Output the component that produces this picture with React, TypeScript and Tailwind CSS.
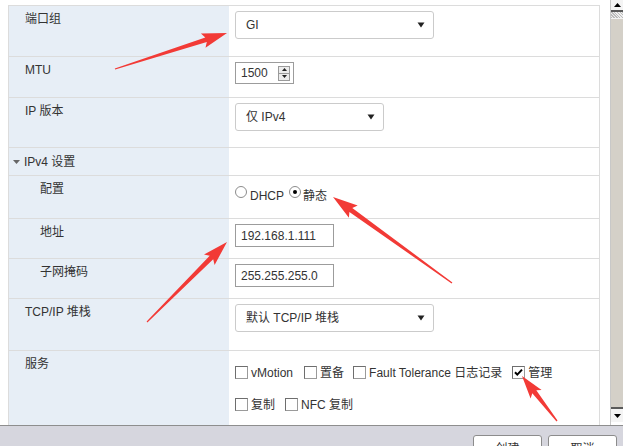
import React from "react";

const FONT = { fontFamily: '"Liberation Sans", "Noto Sans CJK SC", Arial, sans-serif' };

function Tri({ className = "" }: { className?: string }) {
  return (
    <svg width="8" height="6" viewBox="0 0 8 6" className={className}>
      <polygon points="0.5,0.5 7.5,0.5 4,5.5" fill="#222" />
    </svg>
  );
}

function Select({ text, w }: { text: string; w: string }) {
  return (
    <div className={`${w} h-[28px] rounded-[3px] border border-[#cbcbcb] bg-white flex items-center justify-between pl-[10px] pr-[8px]`}>
      <span>{text}</span>
      <Tri />
    </div>
  );
}

function Input({ text }: { text: string }) {
  return (
    <div className="w-[99px] h-[23px] border border-[#9c9c9c] bg-white flex items-center pl-[5px]">
      {text}
    </div>
  );
}

function Checkbox({ checked = false }: { checked?: boolean }) {
  return (
    <div className="w-[13px] h-[13px] border border-[#9a9a9a] border-t-[#6e6e6e] border-l-[#6e6e6e] bg-white shrink-0 relative">
      {checked && (
        <svg width="11" height="11" viewBox="0 0 11 11" className="absolute left-0 top-0">
          <path d="M2 5.2 L4.3 7.6 L9 2.6" stroke="#000" strokeWidth="2" fill="none" />
        </svg>
      )}
    </div>
  );
}

function Radio({ checked = false }: { checked?: boolean }) {
  return (
    <div className="w-[12px] h-[12px] rounded-full border border-[#8c8c8c] bg-white shrink-0 flex items-center justify-center">
      {checked && <div className="w-[4px] h-[4px] rounded-full bg-black" />}
    </div>
  );
}

function Row({
  h,
  label,
  indent = false,
  children,
  valuePad = "pt-[5px]",
}: {
  h: string;
  label: React.ReactNode;
  indent?: boolean;
  children?: React.ReactNode;
  valuePad?: string;
}) {
  return (
    <div className={`flex border-t border-[#dcdcdc] ${h} shrink-0`}>
      <div className={`w-[220px] bg-[#e7eef6] ${indent ? "pl-[31px]" : "pl-[16px]"} pt-[5px] leading-[16px]`}>
        {label}
      </div>
      <div className={`flex-1 pl-[6px] ${valuePad}`}>{children}</div>
    </div>
  );
}

function arrowPoly(x1: number, y1: number, x2: number, y2: number, headLen = 22, headW = 15, shaftW = 5) {
  const dx = x2 - x1;
  const dy = y2 - y1;
  const L = Math.hypot(dx, dy);
  const ux = dx / L;
  const uy = dy / L;
  const nx = -uy;
  const ny = ux;
  const bx = x2 - ux * headLen;
  const by = y2 - uy * headLen;
  const wx = x2 - ux * (headLen + 3);
  const wy = y2 - uy * (headLen + 3);
  const p = (x: number, y: number) => `${x.toFixed(1)},${y.toFixed(1)}`;
  return [
    p(x1 + nx * 0.6, y1 + ny * 0.6),
    p(bx + (nx * shaftW) / 2, by + (ny * shaftW) / 2),
    p(wx + (nx * headW) / 2, wy + (ny * headW) / 2),
    p(x2, y2),
    p(wx - (nx * headW) / 2, wy - (ny * headW) / 2),
    p(bx - (nx * shaftW) / 2, by - (ny * shaftW) / 2),
    p(x1 - nx * 0.6, y1 - ny * 0.6),
  ].join(" ");
}

export default function App() {
  return (
    <div className="w-[623px] h-[446px] relative overflow-hidden bg-white text-[12px] text-[#333] leading-[16px]" style={FONT}>
      <div className="flex flex-col h-full">
        <div className="flex h-[425px] shrink-0">
          <div className="w-[610px] overflow-hidden pt-[5px] pl-[8px]">
            <div className="w-[592px] border-l border-r border-[#dcdcdc] flex flex-col">
              <Row h="h-[51px]" label="端口组">
                <Select text="GI" w="w-[199px]" />
              </Row>
              <Row h="h-[41px]" label="MTU">
                <div className="w-[59px] h-[22px] border border-[#9c9c9c] bg-white flex items-center justify-between pl-[5px] pr-[3px]">
                  <span>1500</span>
                  <div className="flex flex-col w-[12px] h-[15px] border border-[#9a9a9a] bg-[#ececec]">
                    <div className="flex-1 flex items-center justify-center border-b border-[#9a9a9a]">
                      <svg width="5" height="3" viewBox="0 0 5 3"><polygon points="0,3 5,3 2.5,0" fill="#222" /></svg>
                    </div>
                    <div className="flex-1 flex items-center justify-center">
                      <svg width="5" height="3" viewBox="0 0 5 3"><polygon points="0,0 5,0 2.5,3" fill="#222" /></svg>
                    </div>
                  </div>
                </div>
              </Row>
              <Row h="h-[50px]" label="IP 版本">
                <Select text="仅 IPv4" w="w-[149px]" />
              </Row>
              <div className="flex border-t border-[#dcdcdc] h-[28px] shrink-0">
                <div className="w-[220px] bg-[#e7eef6] pl-[4px] flex items-center gap-[4px]">
                  <svg width="7" height="4" viewBox="0 0 7 4"><polygon points="0,0 7,0 3.5,4" fill="#666" /></svg>
                  <span>IPv4 设置</span>
                </div>
                <div className="flex-1" />
              </div>
              <Row h="h-[43px]" label="配置" indent valuePad="pt-[10px]">
                <div className="flex items-start">
                  <Radio />
                  <span className="ml-[3px] mt-[2px]">DHCP</span>
                  <div className="ml-[5px]"><Radio checked /></div>
                  <span className="ml-[2px] mt-[2px]">静态</span>
                </div>
              </Row>
              <Row h="h-[40px]" label="地址" indent>
                <Input text="192.168.1.111" />
              </Row>
              <Row h="h-[40px]" label="子网掩码" indent>
                <Input text="255.255.255.0" />
              </Row>
              <Row h="h-[52px]" label="TCP/IP 堆栈">
                <Select text="默认 TCP/IP 堆栈" w="w-[199px]" />
              </Row>
              <Row h="h-[76px]" label="服务" valuePad="pt-[12px]">
                <div className="flex flex-col gap-[14px]">
                  <div className="flex items-center h-[18px]">
                    <Checkbox />
                    <span className="ml-[3px] mt-[2px]">vMotion</span>
                    <div className="ml-[11px]"><Checkbox /></div>
                    <span className="ml-[3px] mt-[2px]">置备</span>
                    <div className="ml-[9px]"><Checkbox /></div>
                    <span className="ml-[3px] mt-[2px]">Fault Tolerance 日志记录</span>
                    <div className="ml-[10px]"><Checkbox checked /></div>
                    <span className="ml-[3px] mt-[2px]">管理</span>
                  </div>
                  <div className="flex items-center h-[18px]">
                    <Checkbox />
                    <span className="ml-[3px] mt-[2px]">复制</span>
                    <div className="ml-[10px]"><Checkbox /></div>
                    <span className="ml-[3px] mt-[2px]">NFC 复制</span>
                  </div>
                </div>
              </Row>
            </div>
          </div>
          <div className="w-[13px] flex flex-col border-l border-[#c8c8c8] bg-[#d4d0c8]">
            <div className="h-[12px] bg-[#f4f4f4] flex items-center justify-center border-b-2 border-[#5a5a5a]">
              <svg width="7" height="4" viewBox="0 0 7 4"><polygon points="0,4 7,4 3.5,0" fill="#000" /></svg>
            </div>
            <div className="h-[6px] bg-[repeating-linear-gradient(45deg,#bbb_0px,#bbb_1px,#eee_1px,#eee_2px)]" />
            <div className="flex-1 bg-[#d4d0c8] border-t border-[#f2f2f2]" />
            <div className="h-[15px] bg-[#f4f4f4] flex items-center justify-center border-t-2 border-[#5a5a5a]">
              <svg width="7" height="4" viewBox="0 0 7 4"><polygon points="0,0 7,0 3.5,4" fill="#000" /></svg>
            </div>
            <div className="h-[3px] bg-white" />
          </div>
        </div>
        <div className="flex-1 bg-[#d6d6de] border-t border-[#8e8e8e] flex justify-end items-start pt-[9px] pr-[6px] gap-[6px]">
          <div className="w-[69px] h-[22px] rounded-[3px] border border-[#8c8c8c] bg-white flex justify-center pt-[5px]">创建</div>
          <div className="w-[69px] h-[22px] rounded-[3px] border border-[#8c8c8c] bg-white flex justify-center pt-[5px]">取消</div>
        </div>
      </div>
      <svg className="absolute inset-0 pointer-events-none" width="623" height="446" viewBox="0 0 623 446">
        <polygon points={arrowPoly(115, 69, 227, 33)} fill="#f23a36" />
        <polygon points={arrowPoly(452, 283, 333, 197)} fill="#f23a36" />
        <polygon points={arrowPoly(147, 322, 227, 242)} fill="#f23a36" />
        <polygon points={arrowPoly(557, 421, 522, 376, 20, 14, 5)} fill="#f23a36" />
      </svg>
    </div>
  );
}
